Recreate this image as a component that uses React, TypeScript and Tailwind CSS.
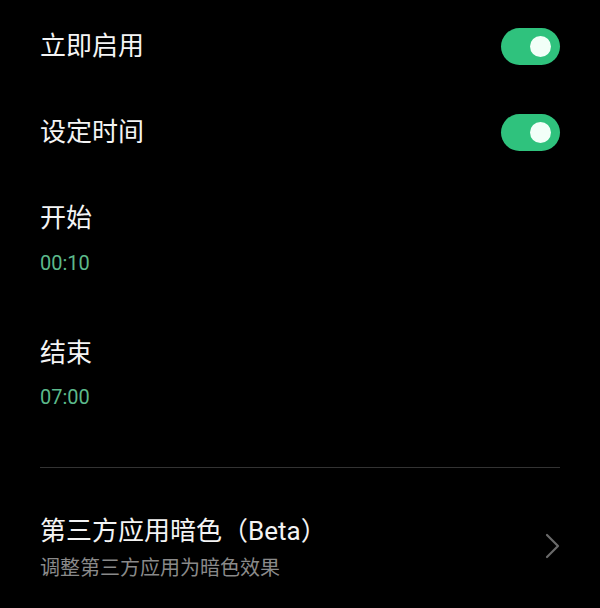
import React from "react";

function Toggle() {
  return (
    <div className="w-[59px] h-[37px] rounded-full bg-[#2fc27d] flex items-center justify-end pr-[9px]">
      <div className="w-[21px] h-[21px] rounded-full bg-[#f2fff8]" />
    </div>
  );
}

export default function App() {
  return (
    <div
      className="w-[600px] h-[608px] bg-black text-white px-10 flex flex-col overflow-hidden font-['Roboto','Noto_Sans_CJK_SC',sans-serif]"
    >
      <div className="h-[92px] flex items-center justify-between">
        <span className="text-[26px] leading-[32px] text-[#f4f4f4]">立即启用</span>
        <Toggle />
      </div>
      <div className="h-[80px] flex items-center justify-between">
        <span className="text-[26px] leading-[32px] text-[#f4f4f4]">设定时间</span>
        <Toggle />
      </div>
      <div className="mt-[30px] text-[26px] leading-[32px] text-[#f4f4f4]">开始</div>
      <div className="mt-[15px] text-[20px] leading-[28px] text-[#5cb98b]">00:10</div>
      <div className="mt-[60px] text-[26px] leading-[32px] text-[#f4f4f4]">结束</div>
      <div className="mt-[14px] text-[20px] leading-[28px] text-[#5cb98b]">07:00</div>
      <div className="mt-[56px] h-px bg-[#333333]" />
      <div className="mt-[47px] flex items-center justify-between">
        <div className="flex flex-col">
          <span className="text-[26px] leading-[32px] text-[#f4f4f4]">第三方应用暗色（Beta）</span>
          <span className="mt-[8px] text-[20px] leading-[26px] text-[#8a8a8a]">调整第三方应用为暗色效果</span>
        </div>
        <svg width="16" height="26" viewBox="0 0 16 26" className="mr-[-1px] mb-[4px]">
          <path d="M2 2 L13 13 L2 24" fill="none" stroke="#6a6a6a" strokeWidth="2.2" strokeLinecap="round" strokeLinejoin="round" />
        </svg>
      </div>
    </div>
  );
}
